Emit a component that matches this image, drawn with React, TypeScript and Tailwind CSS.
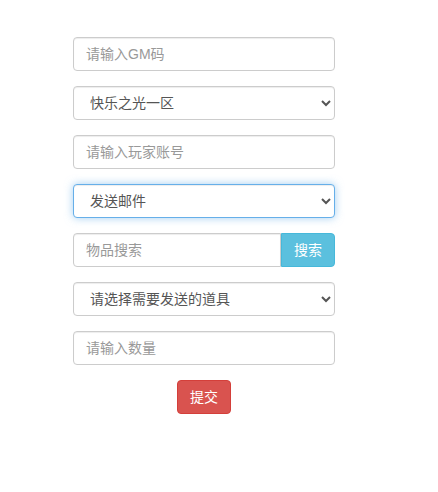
import React from 'react'

const base =
  'block h-[34px] w-full rounded-[4px] border bg-white px-3 py-[6px] text-[14px] text-[#555] outline-none placeholder:text-[#999]'
const field = `${base} border-[#ccc] shadow-[inset_0_1px_1px_rgba(0,0,0,0.075)]`
const focused = `${base} border-[#66afe9] shadow-[inset_0_1px_1px_rgba(0,0,0,0.075),0_0_8px_rgba(102,175,233,0.6)]`

export default function App() {
  return (
    <div className="min-h-[492px] bg-white font-['Liberation_Sans','Noto_Sans_CJK_SC',sans-serif] text-[14px] text-[#333]">
      <form className="ml-[73px] flex w-[262px] flex-col gap-[15px] pt-[37px]">
        <input className={field} placeholder="请输入GM码" />

        <select className={field} defaultValue="1">
          <option value="1">快乐之光一区</option>
        </select>

        <input className={field} placeholder="请输入玩家账号" />

        {/* focused select */}
        <select className={focused} defaultValue="mail">
          <option value="mail">发送邮件</option>
        </select>

        <div className="flex">
          <input
            className="block h-[34px] min-w-0 flex-1 rounded-l-[4px] border border-[#ccc] bg-white px-3 py-[6px] text-[14px] text-[#555] shadow-[inset_0_1px_1px_rgba(0,0,0,0.075)] outline-none placeholder:text-[#999]"
            placeholder="物品搜索"
          />
          <button
            type="button"
            className="h-[34px] w-[54px] rounded-r-[4px] border border-[#46b8da] bg-[#5bc0de] text-[14px] text-white"
          >
            搜索
          </button>
        </div>

        <select className={field} defaultValue="0">
          <option value="0">请选择需要发送的道具</option>
        </select>

        <input className={field} placeholder="请输入数量" />

        <div className="flex justify-center">
          <button
            type="button"
            className="h-[34px] rounded-[4px] border border-[#d43f3a] bg-[#d9534f] px-3 text-[14px] text-white"
          >
            提交
          </button>
        </div>
      </form>
    </div>
  )
}
